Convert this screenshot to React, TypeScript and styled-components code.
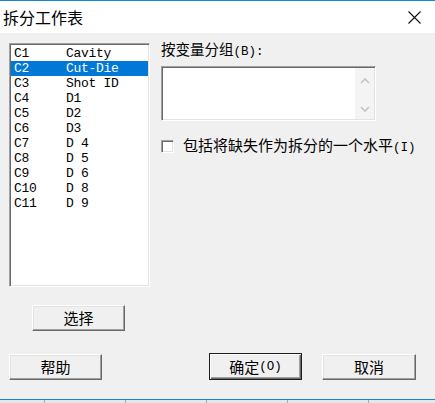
import React from 'react'
import styled, { createGlobalStyle, css } from 'styled-components'

const GlobalStyle = createGlobalStyle`
  html, body {
    margin: 0;
    padding: 0;
    background: #f0f0f0;
  }
  * {
    box-sizing: border-box;
  }
`

const cjk = `"Noto Sans CJK SC", "Microsoft YaHei", sans-serif`
const mono = `"Liberation Mono", "Noto Sans CJK SC", monospace`

type Column = { id: string; name: string }

const columns: Column[] = [
  { id: 'C1', name: 'Cavity' },
  { id: 'C2', name: 'Cut-Die' },
  { id: 'C3', name: 'Shot ID' },
  { id: 'C4', name: 'D1' },
  { id: 'C5', name: 'D2' },
  { id: 'C6', name: 'D3' },
  { id: 'C7', name: 'D 4' },
  { id: 'C8', name: 'D 5' },
  { id: 'C9', name: 'D 6' },
  { id: 'C10', name: 'D 8' },
  { id: 'C11', name: 'D 9' },
]

const sunken = css`
  border: 1px solid;
  border-color: #a0a0a0 #ffffff #ffffff #a0a0a0;
  box-shadow: inset 1px 1px #696969, inset -1px -1px #e3e3e3;
  background: #ffffff;
`

const Window = styled.div`
  width: 435px;
  height: 403px;
  display: flex;
  flex-direction: column;
  overflow: hidden;
  background: #f0f0f0;
`

const TitleBar = styled.div`
  height: 33px;
  border-top: 1px solid #1883d7;
  background: #ffffff;
  display: flex;
  align-items: center;
  justify-content: space-between;
  padding: 0 14px 0 3px;
`

const Title = styled.span`
  font-family: ${cjk};
  font-size: 16px;
  line-height: 20px;
  color: #000;
`

const Body = styled.div`
  flex: 1;
  display: flex;
  flex-direction: column;
  padding: 10px 19px 19px 9px;
`

const Main = styled.div`
  display: flex;
  gap: 11px;
  align-items: flex-start;
`

const LeftColumn = styled.div`
  display: flex;
  flex-direction: column;
  align-items: flex-start;
`

const ListBox = styled.div`
  ${sunken};
  width: 141px;
  height: 244px;
  padding: 2px 1px 1px;
  display: flex;
  flex-direction: column;
`

const ListRow = styled.div<{ $selected?: boolean }>`
  display: grid;
  grid-template-columns: 52px 1fr;
  height: 15px;
  padding-left: 3px;
  font-family: ${mono};
  font-size: 13px;
  letter-spacing: -0.3px;
  line-height: 16px;
  white-space: pre;
  color: ${({ $selected }) => ($selected ? '#ffffff' : '#000000')};
  background: ${({ $selected }) => ($selected ? '#0078d7' : 'transparent')};
`

const RightColumn = styled.div`
  display: flex;
  flex-direction: column;
`

const Label = styled.div`
  margin-top: -2px;
  font-family: ${cjk};
  font-size: 14.5px;
  line-height: 15px;
  color: #000;
  white-space: nowrap;
`

const Latin = styled.span`
  font-family: ${mono};
  font-size: 12.5px;
`

const GroupBox = styled.div`
  ${sunken};
  margin-top: 6px;
  width: 215px;
  height: 55px;
  padding: 1px;
  display: flex;
  justify-content: flex-end;
`

const ScrollBar = styled.div`
  width: 19px;
  height: 100%;
  background: #f4f4f4;
  display: flex;
  flex-direction: column;
  align-items: center;
  justify-content: space-between;
  padding: 8px 0 5px;
`

const CheckRow = styled.label`
  margin-top: 16px;
  display: flex;
  align-items: center;
  gap: 9px;
`

const CheckBox = styled.span`
  ${sunken};
  width: 13px;
  height: 13px;
`

const CheckText = styled.span`
  font-family: ${cjk};
  font-size: 15px;
  line-height: 16px;
  color: #000;
  white-space: nowrap;
`

const Button = styled.button<{ $default?: boolean; $width?: number }>`
  width: ${({ $width }) => $width ?? 93}px;
  height: ${({ $default }) => ($default ? 27 : 26)}px;
  padding: 0;
  background: #f0f0f0;
  font-family: ${cjk};
  font-size: 15px;
  line-height: 18px;
  color: #000;
  border: 1px solid;
  border-color: #ffffff #696969 #696969 #ffffff;
  box-shadow: inset -1px -1px #a0a0a0, inset 1px 1px #e3e3e3;
  display: flex;
  align-items: center;
  justify-content: center;

  ${({ $default }) =>
    $default &&
    css`
      border-color: #1e1e1e;
      box-shadow: inset 1px 1px #ffffff, inset -1px -1px #696969, inset -2px -2px #a0a0a0;
    `}
`

const SelectButton = styled(Button)`
  margin-top: 18px;
  margin-left: 23px;
`

const Footer = styled.div`
  margin-top: auto;
  display: flex;
  align-items: flex-end;
`

const FooterRight = styled.div`
  margin-left: auto;
  display: flex;
  align-items: flex-end;
  gap: 20px;
`

const BottomEdge = styled.div`
  height: 4px;
  border-top: 1px solid #1883d7;
  background: #e6e6e6;
  display: grid;
  grid-template-columns: 45px repeat(5, 81px) 1fr;
`

const EdgeCell = styled.span`
  border-right: 1px solid #a8a8a8;

  &:last-child {
    border-right: none;
  }
`

const CloseIcon = () => (
  <svg width="13" height="13" viewBox="0 0 13 13">
    <path d="M0.5 0.5 L12.5 12.5 M12.5 0.5 L0.5 12.5" stroke="#111" strokeWidth="1.1" fill="none" />
  </svg>
)

const Chevron = ({ up }: { up?: boolean }) => (
  <svg width="10" height="10" viewBox="0 0 10 10">
    <path
      d={up ? 'M1 7 L5 3 L9 7' : 'M1 3 L5 7 L9 3'}
      stroke="#c4c4c4"
      strokeWidth="1.6"
      fill="none"
    />
  </svg>
)

export default function App() {
  return (
    <>
      <GlobalStyle />
      <Window>
        <TitleBar>
          <Title>拆分工作表</Title>
          <CloseIcon />
        </TitleBar>
        <Body>
          <Main>
            <LeftColumn>
              <ListBox>
                {columns.map((c) => (
                  <ListRow key={c.id} $selected={c.id === 'C2'}>
                    <span>{c.id}</span>
                    <span>{c.name}</span>
                  </ListRow>
                ))}
              </ListBox>
              <SelectButton>选择</SelectButton>
            </LeftColumn>
            <RightColumn>
              <Label>
                按变量分组<Latin>(B):</Latin>
              </Label>
              <GroupBox>
                <ScrollBar>
                  <Chevron up />
                  <Chevron />
                </ScrollBar>
              </GroupBox>
              <CheckRow>
                <CheckBox />
                <CheckText>
                  包括将缺失作为拆分的一个水平<Latin>(I)</Latin>
                </CheckText>
              </CheckRow>
            </RightColumn>
          </Main>
          <Footer>
            <Button>帮助</Button>
            <FooterRight>
              <Button $default>
                确定<Latin>(O)</Latin>
              </Button>
              <Button $width={94}>取消</Button>
            </FooterRight>
          </Footer>
        </Body>
        <BottomEdge>
          {Array.from({ length: 7 }).map((_, i) => (
            <EdgeCell key={i} />
          ))}
        </BottomEdge>
      </Window>
    </>
  )
}
